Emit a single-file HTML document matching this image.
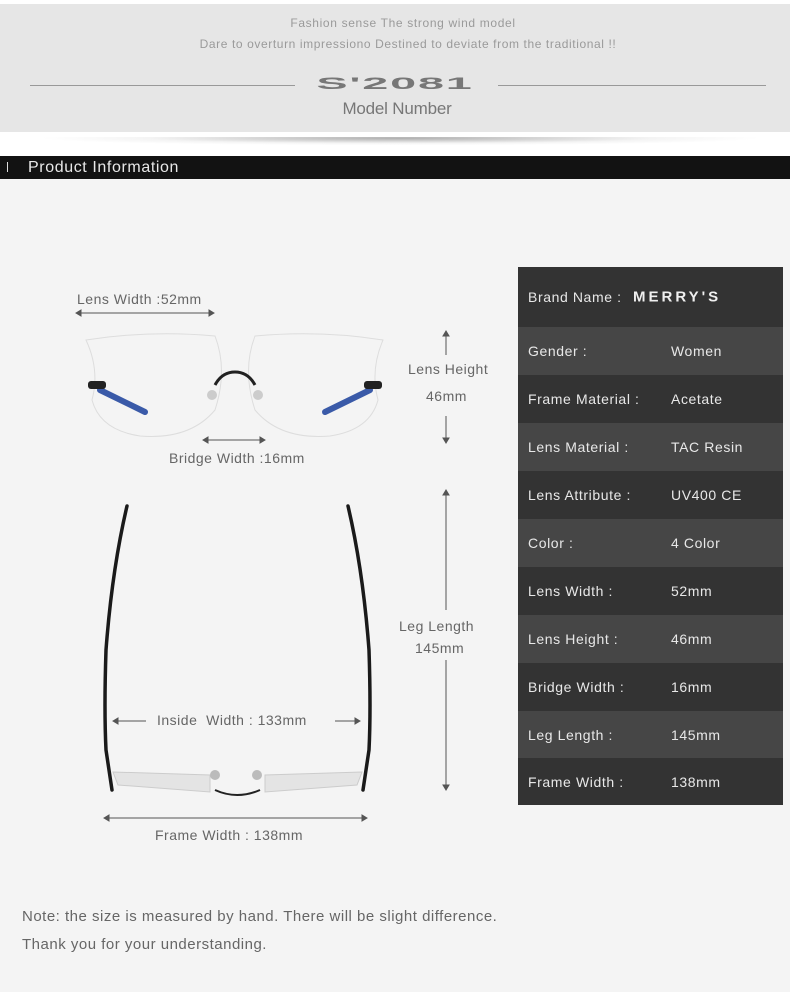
<!DOCTYPE html>
<html><head><meta charset="utf-8"><style>
*{margin:0;padding:0;box-sizing:border-box}
body{width:790px;height:992px;background:#f4f4f4;position:relative;overflow:hidden;font-family:"Liberation Sans",sans-serif;color:#666}
.a{position:absolute;white-space:nowrap}
.t{font-size:14px;letter-spacing:.5px;color:#666}
.row{position:absolute;left:518px;width:265px;color:#e8e8e8;font-size:14px;letter-spacing:.6px}
.row span{position:absolute;top:50%;transform:translateY(-50%)}
.row .k{left:10px}.row .v{left:153px}
</style></head><body>
<div class="a" style="left:0;top:0;width:790px;height:4px;background:#fff"></div>
<div class="a" style="left:0;top:4px;width:790px;height:128px;background:#e6e6e6"></div>
<div class="a" style="left:0;top:132px;width:790px;height:24px;background:#fff"></div>
<div class="a" style="left:40px;top:137px;width:720px;height:12px;background:radial-gradient(ellipse 50% 60% at 50% 10%,rgba(120,120,120,.6),rgba(200,200,200,.2) 70%,rgba(255,255,255,0))"></div>
<div class="a" style="left:0;top:16px;width:806px;text-align:center;font-size:12px;color:#9a9a9a;letter-spacing:.65px">Fashion sense The strong wind model</div>
<div class="a" style="left:0;top:37px;width:816px;text-align:center;font-size:12px;color:#9a9a9a;letter-spacing:.6px">Dare to overturn impressiono Destined to deviate from the traditional !!</div>
<div class="a" style="left:30px;top:85px;width:265px;height:1px;background:#999"></div>
<div class="a" style="left:498px;top:85px;width:268px;height:1px;background:#999"></div>
<div class="a" style="left:205px;top:68px;width:380px;text-align:center;font-size:26px;font-weight:bold;color:#777;letter-spacing:1px;transform:scale(1.8,.65)">S'2081</div>
<div class="a" style="left:0;top:99px;width:794px;text-align:center;font-size:17px;color:#777;letter-spacing:-.2px">Model Number</div>
<div class="a" style="left:0;top:156px;width:790px;height:23px;background:#121212"></div>
<div class="a" style="left:7px;top:162px;width:1px;height:10px;background:#ddd"></div>
<div class="a" style="left:28px;top:159px;font-size:16px;letter-spacing:.6px;color:#e8e8e8">Product Information</div>

<div class="a t" style="left:77px;top:291px">Lens Width :52mm</div>
<div class="a t" style="left:169px;top:450px">Bridge Width :16mm</div>
<div class="a t" style="left:408px;top:361px">Lens Height</div>
<div class="a t" style="left:426px;top:388px">46mm</div>
<div class="a t" style="left:399px;top:618px">Leg Length</div>
<div class="a t" style="left:415px;top:640px">145mm</div>
<div class="a t" style="left:157px;top:712px">Inside &nbsp;Width : 133mm</div>
<div class="a t" style="left:155px;top:827px">Frame Width : 138mm</div>

<svg class="a" style="left:0;top:0" width="790" height="992">
<g stroke="#555" stroke-width="1" fill="#555">
<line x1="76" y1="313" x2="214" y2="313"/><path d="M76 313l5-3v6z M214 313l-5-3v6z"/>
<line x1="203" y1="440" x2="265" y2="440"/><path d="M203 440l5-3v6z M265 440l-5-3v6z"/>
<line x1="446" y1="331" x2="446" y2="355"/><path d="M446 331l-3 5h6z"/>
<line x1="446" y1="416" x2="446" y2="443"/><path d="M446 443l-3-5h6z"/>
<line x1="446" y1="490" x2="446" y2="610"/><path d="M446 490l-3 5h6z"/>
<line x1="446" y1="660" x2="446" y2="790"/><path d="M446 790l-3-5h6z"/>
<line x1="113" y1="721" x2="146" y2="721"/><path d="M113 721l5-3v6z"/>
<line x1="335" y1="721" x2="360" y2="721"/><path d="M360 721l-5-3v6z"/>
<line x1="104" y1="818" x2="367" y2="818"/><path d="M104 818l5-3v6z M367 818l-5-3v6z"/>
</g>
<g fill="none" stroke="#ddd" stroke-width="1">
<path d="M86 340 Q150 330 215 336 Q228 370 215 410 Q190 440 140 436 Q100 430 92 400 Q100 370 86 340z"/>
<path d="M383 340 Q320 330 255 336 Q242 370 255 410 Q280 440 330 436 Q370 430 378 400 Q370 370 383 340z"/>
</g>
<path d="M215 385 Q222 372 235 372 Q248 372 255 385" stroke="#222" stroke-width="3" fill="none"/>
<circle cx="212" cy="395" r="5" fill="#ccc"/><circle cx="258" cy="395" r="5" fill="#ccc"/>
<path d="M100 390 L145 412" stroke="#3a5aa8" stroke-width="6" stroke-linecap="round"/>
<path d="M370 390 L325 412" stroke="#3a5aa8" stroke-width="6" stroke-linecap="round"/>
<rect x="88" y="381" width="18" height="8" rx="3" fill="#222"/><rect x="364" y="381" width="18" height="8" rx="3" fill="#222"/>
<path d="M127 506 Q112 570 106 650 Q104 710 106 750 L112 790" stroke="#1a1a1a" stroke-width="3.5" fill="none" stroke-linecap="round"/>
<path d="M348 506 Q363 570 369 650 Q371 710 369 750 L363 790" stroke="#1a1a1a" stroke-width="3.5" fill="none" stroke-linecap="round"/>
<path d="M113 772 L210 775 L210 792 L118 785z" fill="#e4e4e4" stroke="#ccc"/>
<path d="M362 772 L265 775 L265 792 L357 785z" fill="#e4e4e4" stroke="#ccc"/>
<path d="M215 790 Q237 800 260 790" stroke="#222" stroke-width="2" fill="none"/>
<circle cx="215" cy="775" r="5" fill="#bbb"/><circle cx="257" cy="775" r="5" fill="#bbb"/>
</svg>

<div class="row" style="top:267px;height:60px;background:#333"><span class="k">Brand Name :</span><span style="left:115px;font-weight:bold;font-size:15px;letter-spacing:3px;color:#f0f0f0;top:50%">MERRY'S</span></div>
<div class="row" style="top:327px;height:48px;background:#464646"><span class="k">Gender :</span><span class="v">Women</span></div>
<div class="row" style="top:375px;height:48px;background:#333"><span class="k">Frame Material :</span><span class="v">Acetate</span></div>
<div class="row" style="top:423px;height:48px;background:#464646"><span class="k">Lens Material :</span><span class="v">TAC Resin</span></div>
<div class="row" style="top:471px;height:48px;background:#333"><span class="k">Lens Attribute :</span><span class="v">UV400 CE</span></div>
<div class="row" style="top:519px;height:48px;background:#464646"><span class="k">Color :</span><span class="v">4 Color</span></div>
<div class="row" style="top:567px;height:48px;background:#333"><span class="k">Lens Width :</span><span class="v">52mm</span></div>
<div class="row" style="top:615px;height:48px;background:#464646"><span class="k">Lens Height :</span><span class="v">46mm</span></div>
<div class="row" style="top:663px;height:48px;background:#333"><span class="k">Bridge Width :</span><span class="v">16mm</span></div>
<div class="row" style="top:711px;height:47px;background:#464646"><span class="k">Leg Length :</span><span class="v">145mm</span></div>
<div class="row" style="top:758px;height:47px;background:#333"><span class="k">Frame Width :</span><span class="v">138mm</span></div>

<div class="a" style="left:22px;top:908px;font-size:15px;letter-spacing:.5px;color:#666">Note: the size is measured by hand. There will be slight difference.</div>
<div class="a" style="left:22px;top:936px;font-size:15px;letter-spacing:.5px;color:#666">Thank you for your understanding.</div>
</body></html>
